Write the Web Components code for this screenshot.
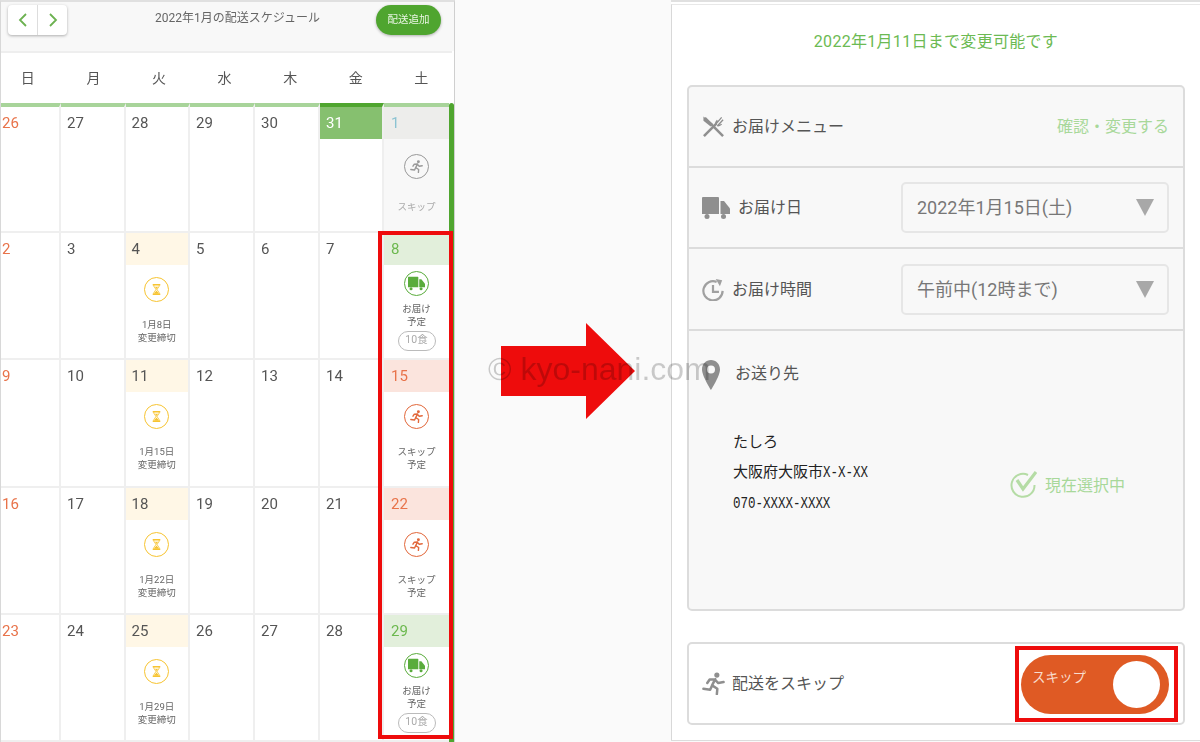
<!DOCTYPE html>
<html lang="ja">
<head>
<meta charset="utf-8">
<title>配送スケジュール</title>
<style>
  html, body { margin: 0; height: 100%; }
  body {
    background: #fafafa;
    font-family: Roboto, "Noto Sans CJK JP", sans-serif;
    color: #555;
    overflow: hidden;
  }
  .page { display: flex; width: 1200px; height: 742px; position: relative; filter: blur(.3px); }
</style>
</head>
<body>
<div class="page">
  <schedule-calendar></schedule-calendar>
  <red-arrow></red-arrow>
  <delivery-panel></delivery-panel>
  <water-mark>© kyo-nani.com</water-mark>
</div>

<script>
const RUNNER = '<circle cx="15.500" cy="3.200" r="2.700"/><path fill="none" stroke="currentColor" stroke-width="2.600" stroke-linejoin="round" stroke-linecap="round" d="M13.800 7.500L10.500 14M13.800 7.500L8 7.800 5.500 11.500M13.500 8L17 11.500 22.500 10.500M10.500 14L16 17.500 15.500 23M10.500 14L8.500 18.500 1.500 17.500"/>';
const TRUCK = '<path d="M1 0h15a1 1 0 0 1 1 1v16H0V1a1 1 0 0 1 1-1z"/><path d="M18.500 4h3.500l6 7.500V17h-9.500z"/><circle cx="5" cy="19.500" r="2.500"/><circle cx="21.500" cy="19.500" r="2.500"/>';
const HOURGLASS = '<path d="M5 2h14v2.500H5zM5 19.500h14V22H5z"/><path d="M7 4c0 4 3 5.500 4 8-1 2.500-4 4-4 8M17 4c0 4-3 5.500-4 8 1 2.500 4 4 4 8" fill="none" stroke="currentColor" stroke-width="1.800"/><path d="M8 20c0-3 3-4 4-6 1 2 4 3 4 6zM9 7h6l-3 4z"/>';

class StatusIcon extends HTMLElement {
  connectedCallback() {
    const kind = this.getAttribute("kind");
    const shapes = {
      run: ['0 0 24 24', RUNNER, 13],
      truck: ['0 0 28 22', TRUCK, 17],
      wait: ['0 0 24 24', HOURGLASS, 13]
    }[kind];
    this.attachShadow({mode: "open"}).innerHTML = `
      <style>
        :host {
          display: flex; align-items: center; justify-content: center;
          width: 25px; height: 25px; box-sizing: border-box;
          border: 1.5px solid currentColor; border-radius: 50%;
          background: #fff;
        }
        svg { fill: currentColor; display: block; }
      </style>
      <svg viewBox="${shapes[0]}" width="${shapes[2]}" height="${shapes[2]}">${shapes[1]}</svg>`;
  }
}
customElements.define("status-icon", StatusIcon);

class CalCell extends HTMLElement {
  connectedCallback() {
    const date = this.getAttribute("date");
    const tone = this.getAttribute("tone") || "plain";
    const icons = {off: "run", wait: "wait", deliver: "truck", skip: "run"};
    const icon = icons[tone] ? `<status-icon kind="${icons[tone]}"></status-icon>` : "";
    this.attachShadow({mode: "open"}).innerHTML = `
      <style>
        :host {
          display: flex; flex-direction: column;
          box-sizing: border-box; min-width: 0;
          border-right: 2px solid #efefef;
          border-bottom: 2px solid #efefef;
          background: #fff;
        }
        :host([top]) { border-top: 4px solid #a8d49a; }
        :host([today]) { border-top-color: #4fa52f; }
        :host([last]) { border-right: 0; }
        :host([edge]) { padding-left: 0; }
        .head {
          height: 32px; box-sizing: border-box; flex: none;
          padding-left: 6px;
          font-size: 15px; line-height: 32px; color: #555;
        }
        :host([edge]) .head { padding-left: 1px; }
        :host([sun]) .head { color: #e8734a; }
        .body {
          flex: 1; display: flex; flex-direction: column; align-items: center;
          font-size: 9.500px; line-height: 13px; text-align: center; color: #666;
          padding-top: 12px;
        }
        .text { margin-top: 16px; white-space: pre-line; }
        :host([tone="today"]) .head { background: #86c06f; color: #fff; }
        :host([tone="wait"]) .head { background: #fff7e6; }
        :host([tone="wait"]) status-icon { color: #f7c431; }
        :host([tone="deliver"]) .head { background: #e2efdb; color: #6cb84e; padding-left: 7px; }
        :host([tone="deliver"]) status-icon { color: #5aac3c; }
        :host([tone="deliver"]) .body { padding-top: 6px; }
        :host([tone="deliver"]) .text { margin-top: 7px; line-height: 12.500px; }
        :host([tone="skip"]) .head { background: #fbe4dd; color: #e8734a; padding-left: 7px; }
        :host([tone="skip"]) status-icon { color: #e2673a; }
        :host([tone="off"]) { background: #f8f8f8; }
        :host([tone="off"]) .head { background: #ededeb; color: #8cc3d2; padding-left: 7px; }
        :host([tone="off"]) .body { padding-top: 15px; color: #aaa; }
        :host([tone="off"]) .text { margin-top: 21px; }
        :host([tone="off"]) status-icon { color: #999; background: transparent; }
        .pill {
          margin-top: 3px; width: 38px; height: 20px; box-sizing: border-box;
          border: 1.5px solid #bbb; border-radius: 10px;
          font-size: 10.500px; line-height: 16px; color: #aaa;
        }
      </style>
      <div class="head">${date}</div>
      <div class="body">
        ${icon}
        <div class="text"><slot></slot></div>
        ${tone === "deliver" ? '<div class="pill">10食</div>' : ""}
      </div>`;
  }
}
customElements.define("cal-cell", CalCell);

class NavToolbar extends HTMLElement {
  constructor() {
    super();
    this.attachShadow({mode: "open"}).innerHTML = `
      <style>
        :host {
          display: flex; align-items: flex-start; flex: none;
          height: 49px; box-sizing: border-box;
          padding: 3px 13px 0 7px;
          background: #f8f8f8;
        }
        .nav {
          display: flex; width: 59px; height: 30px;
          background: #fff; border-radius: 4px;
          box-shadow: 0 1px 3px rgba(0,0,0,.3);
        }
        .nav span { flex: 1; display: flex; align-items: center; justify-content: center; }
        .nav span + span { border-left: 1px solid #ddd; }
        .nav svg { fill: none; stroke: #6cb150; stroke-width: 1.800; }
        .title {
          flex: 1; text-align: center; padding: 5px 0 0 32px;
          font-size: 12px; line-height: 16px; color: #666; white-space: nowrap;
        }
        .add {
          width: 65px; height: 30px; border-radius: 15px;
          background: #4fa52f; color: #eaf5e4;
          font-size: 10.500px; line-height: 30px; text-align: center;
          box-shadow: 0 1px 3px rgba(0,0,0,.3);
        }
      </style>
      <div class="nav">
        <span><svg width="10" height="14" viewBox="0 0 10 14"><path d="M8 1L2 7l6 6"/></svg></span>
        <span><svg width="10" height="14" viewBox="0 0 10 14"><path d="M2 1l6 6-6 6"/></svg></span>
      </div>
      <div class="title"><slot></slot></div>
      <div class="add">配送追加</div>`;
  }
}
customElements.define("nav-toolbar", NavToolbar);

class ScheduleCalendar extends HTMLElement {
  constructor() {
    super();
    const tones = {
      1: ["off", "スキップ"], 8: ["deliver", "お届け\n予定"], 15: ["skip", "スキップ\n予定"],
      22: ["skip", "スキップ\n予定"], 29: ["deliver", "お届け\n予定"],
      4: ["wait", "1月8日\n変更締切"], 11: ["wait", "1月15日\n変更締切"],
      18: ["wait", "1月22日\n変更締切"], 25: ["wait", "1月29日\n変更締切"]
    };
    const dates = [26,27,28,29,30,31,1];
    for (let d = 2; d <= 29; d++) dates.push(d);
    const cells = dates.map((d, i) => {
      const first = i < 7;
      const t = first && d !== 1 ? null : tones[d];
      const attrs = [`date="${d}"`];
      if (first) attrs.push("top");
      if (i === 5) attrs.push('tone="today"', "today");
      if (t) attrs.push(`tone="${t[0]}"`);
      if (i % 7 === 0) attrs.push("edge", "sun");
      if (i % 7 === 6) attrs.push("last");
      return `<cal-cell ${attrs.join(" ")}>${t ? t[1] : ""}</cal-cell>`;
    }).join("");
    const week = ["日","月","火","水","木","金","土"].map(w => `<span>${w}</span>`).join("");
    this.attachShadow({mode: "open"}).innerHTML = `
      <style>
        :host {
          display: flex; flex-direction: column; flex: none; position: relative;
          width: 455px; height: 742px; box-sizing: border-box;
          background: #fff; overflow: hidden;
          border-top: 2px solid #e0e0e0;
          border-left: 1px solid #d8d8d8;
          border-right: 1px solid #cfcfcf;
        }
        .rule { height: 2px; flex: none; background: #eee; margin-right: 2px; }
        .week {
          display: grid; grid-template-columns: repeat(7, 65.600px);
          flex: none; height: 50px; margin-left: -6px;
          align-items: center; text-align: center;
          font-size: 14px; color: #555;
          padding-bottom: 3px; box-sizing: border-box;
        }
        .cal { display: flex; flex: 1; min-height: 0; }
        .grid {
          display: grid; flex: none; width: 448px;
          grid-template-columns: 60px 64.500px 64.500px 65px 65px 64px 65px;
          grid-template-rows: 130px 127px 128px 127px 127px;
        }
        .bar { width: 5px; background: #4fa52f; border-radius: 3px 3px 0 0; }
        .frame {
          position: absolute; left: 377px; top: 229px;
          width: 75px; height: 508px; box-sizing: border-box;
          border: 4px solid #ee0c0c; pointer-events: none;
        }
      </style>
      <nav-toolbar>2022年1月の配送スケジュール</nav-toolbar>
      <div class="rule"></div>
      <div class="week">${week}</div>
      <div class="cal"><div class="grid">${cells}</div><div class="bar"></div></div>
      <div class="frame"></div>`;
  }
}
customElements.define("schedule-calendar", ScheduleCalendar);

class RedArrow extends HTMLElement {
  constructor() {
    super();
    this.attachShadow({mode: "open"}).innerHTML = `
      <style>
        :host {
          display: flex; flex: none; align-items: center;
          width: 216px; padding-left: 46px; box-sizing: border-box;
        }
        svg { display: block; fill: #ee0c0c; }
      </style>
      <svg width="134" height="96" viewBox="0 0 134 96"><path d="M0 23h85V0l49 48-49 48V73H0z"/></svg>`;
  }
}
customElements.define("red-arrow", RedArrow);

class FormRow extends HTMLElement {
  constructor() {
    super();
    this.attachShadow({mode: "open"}).innerHTML = `
      <style>
        :host {
          display: flex; align-items: center; justify-content: space-between;
          box-sizing: border-box; height: 81px;
          padding: 0 14px 0 13px;
          border-bottom: 2px solid #dcdcdc;
        }
        :host([tall]) { height: 82px; }
        .label { display: flex; align-items: center; gap: var(--gap, 8px); font-size: 16px; color: #555; }
        .text { padding-bottom: 3px; }
      </style>
      <div class="label"><slot name="icon"></slot><span class="text"><slot></slot></span></div>
      <slot name="end"></slot>`;
  }
}
customElements.define("form-row", FormRow);

class SelectBox extends HTMLElement {
  constructor() {
    super();
    this.attachShadow({mode: "open"}).innerHTML = `
      <style>
        :host {
          display: flex; align-items: center; justify-content: space-between;
          width: 268px; height: 51px; box-sizing: border-box;
          padding: 0 13px 0 14px;
          border: 2px solid #e6e6e6; border-radius: 5px;
          font-size: 18px; color: #777;
        }
        .text { padding-bottom: 3px; }
        i { width: 0; height: 0; border-style: solid; border-width: 17px 9.500px 0; border-color: #a8a8a8 transparent transparent; }
      </style>
      <span class="text"><slot></slot></span><i></i>`;
  }
}
customElements.define("select-box", SelectBox);

class SkipToggle extends HTMLElement {
  constructor() {
    super();
    this.attachShadow({mode: "open"}).innerHTML = `
      <style>
        :host {
          display: block; box-sizing: border-box; width: 163px; height: 76px;
          padding: 5px 5px 0 2px; margin-right: 5px;
          border: 4px solid #ee0c0c;
        }
        .track {
          display: flex; align-items: flex-start; justify-content: space-between;
          width: 148px; height: 59px; box-sizing: border-box;
          padding: 6px 9px 0 11px;
          border-radius: 30px; background: #df5a24;
        }
        .text { font-size: 13.500px; line-height: 32px; color: #f8dccd; }
        .knob { width: 47px; height: 47px; border-radius: 50%; background: #fff; }
      </style>
      <div class="track"><span class="text"><slot></slot></span><span class="knob"></span></div>`;
  }
}
customElements.define("skip-toggle", SkipToggle);

class DeliveryPanel extends HTMLElement {
  constructor() {
    super();
    this.attachShadow({mode: "open"}).innerHTML = `
      <style>
        :host {
          display: block; flex: none; width: 529px; height: 741px; box-sizing: border-box;
          border-top: 2px solid #e0e0e0;
          border-bottom: 1px solid #dcdcdc;
          background: #fff;
        }
        .inner {
          margin-top: 2px; height: 736px; box-sizing: border-box;
          border-top: 1px solid #e8e8e8;
          border-left: 1px solid #d8d8d8;
          padding: 0 15px;
        }
        .notice {
          height: 80px; box-sizing: border-box; padding-bottom: 11px;
          display: flex; align-items: center; justify-content: center;
          font-size: 16px; letter-spacing: .3px; color: #6cba53;
        }
        .box {
          height: 526px; box-sizing: border-box;
          border: 2px solid #dcdcdc; border-radius: 5px; background: #f8f8f8;
          overflow: hidden;
        }
        .link { font-size: 16px; color: #a8d89a; padding-bottom: 3px; }
        .addr { padding: 0 13px; }
        .addr-head {
          display: flex; align-items: center; gap: 15px;
          padding-top: 28px; height: 32px;
          font-size: 16px; color: #555;
        }
        .addr-head span { padding-bottom: 6px; }
        .addr-body { display: flex; align-items: flex-start; margin-top: 36px; padding-left: 31px; }
        .lines { width: 275px; font-size: 15px; line-height: 30px; color: #222; }
        .mono {
          display: inline-block; font-family: "Liberation Mono", monospace; font-size: 16px;
          transform: scaleX(.78); transform-origin: 0 50%;
          margin-right: calc(var(--n) * -2.110px);
        }
        .current { display: flex; align-items: center; gap: 8px; margin-top: 44px; font-size: 16px; color: #a8d89a; }
        .current span { padding-bottom: 3px; }
        .skip-box {
          display: flex; align-items: center; justify-content: space-between;
          height: 83px; box-sizing: border-box; margin-top: 31px;
          padding-left: 13px;
          border: 2px solid #dcdcdc; border-radius: 5px; background: #fff;
        }
        .skip-label { display: flex; align-items: center; gap: 7px; font-size: 16px; color: #555; }
        .skip-label span { padding-bottom: 3px; }
        svg { display: block; flex: none; }
      </style>
      <div class="inner">
        <div class="notice">2022年1月11日まで変更可能です</div>
        <div class="box">
          <form-row style="--gap:7px">
            <svg slot="icon" width="23" height="23" viewBox="0 0 24 24" fill="none" stroke="#8f8f8f" stroke-width="2.600">
              <path d="M2 22L15 9"/>
              <path d="M14 10l6.500-7.500M16 11.500l6-6.500M14 10c0-2 .5-3 2-4.500M16 11.500c2 0 3-.5 4.500-2" stroke-width="1.400"/>
              <path d="M3 3l19 19"/>
              <path d="M1.500 1.500l10 8-2.500 2.500-7.500-6z" fill="#8f8f8f" stroke="none"/>
            </svg>
            お届けメニュー
            <span slot="end" class="link">確認・変更する</span>
          </form-row>
          <form-row>
            <svg slot="icon" width="28" height="22" viewBox="0 0 28 22" fill="#8f8f8f">${TRUCK}</svg>
            お届け日
            <select-box slot="end">2022年1月15日(土)</select-box>
          </form-row>
          <form-row tall>
            <svg slot="icon" width="22" height="23" viewBox="0 0 24 25" fill="none" stroke="#a0a0a0" stroke-width="2.400">
              <path d="M16 4.200A10.500 10.500 0 1 0 22.500 14"/>
              <path d="M12 7.500v7.500h6.500"/>
              <path d="M15 1l7 1.500-2.500 6.500z" fill="#a0a0a0" stroke="none"/>
            </svg>
            お届け時間
            <select-box slot="end">午前中(12時まで)</select-box>
          </form-row>
          <div class="addr">
            <div class="addr-head">
              <svg width="18" height="30" viewBox="0 0 18 30"><path fill="#8e8e8e" fill-rule="evenodd" d="M9 0C4 0 0 4 0 9.500 0 16 9 30 9 30s9-14 9-20.500C18 4 14 0 9 0zm0 5.500a4 4 0 1 1 0 8 4 4 0 0 1 0-8z"/></svg>
              <span>お送り先</span>
            </div>
            <div class="addr-body">
              <div class="lines">たしろ<br>大阪府大阪市<span class="mono" style="--n:6">X-X-XX</span><br><span class="mono" style="--n:13">070-XXXX-XXXX</span></div>
              <div class="current">
                <svg width="29" height="29" viewBox="0 0 29 29" fill="none" stroke="#b5dca5" stroke-width="2">
                  <path d="M26.500 14A11.500 11.500 0 1 1 20 4"/>
                  <path d="M9 9l6 9L28 1" stroke-width="3.200"/>
                </svg>
                <span>現在選択中</span>
              </div>
            </div>
          </div>
        </div>
        <div class="skip-box">
          <span class="skip-label">
            <svg width="23" height="23" viewBox="0 0 24 24" fill="#8f8f8f" color="#8f8f8f">${RUNNER}</svg>
            <span>配送をスキップ</span>
          </span>
          <skip-toggle>スキップ</skip-toggle>
        </div>
      </div>`;
  }
}
customElements.define("delivery-panel", DeliveryPanel);

class WaterMark extends HTMLElement {
  constructor() {
    super();
    this.attachShadow({mode: "open"}).innerHTML = `
      <style>
        :host {
          position: absolute; left: 488px; top: 350px;
          font-family: "Liberation Sans", sans-serif; font-size: 32px; line-height: 38px;
          color: rgba(0,0,0,.2); white-space: nowrap; pointer-events: none;
        }
      </style>
      <slot></slot>`;
  }
}
customElements.define("water-mark", WaterMark);
</script>
</body>
</html>
